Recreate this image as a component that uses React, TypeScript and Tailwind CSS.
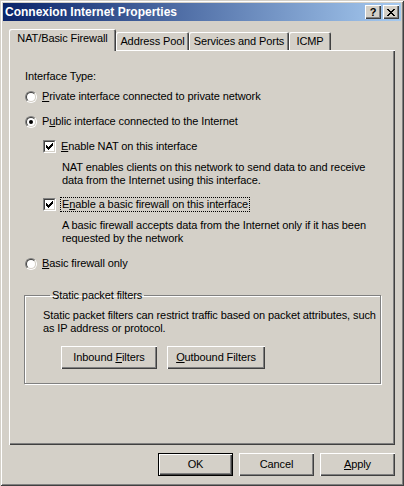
import React from 'react';

const face = 'bg-[#d4d0c8]';
const raised = 'shadow-[inset_1px_1px_0_#ffffff,inset_-1px_-1px_0_#404040,inset_-2px_-2px_0_#808080]';

function U({ children }: { children: React.ReactNode }) {
  return <span className="underline underline-offset-[1px]">{children}</span>;
}

function Radio({ checked }: { checked?: boolean }) {
  return (
    <span className="relative block h-[12px] w-[12px] shrink-0 rounded-full border border-t-[#808080] border-l-[#808080] border-b-white border-r-white">
      <span className="flex h-full w-full items-center justify-center rounded-full border border-t-[#404040] border-l-[#404040] border-b-[#d4d0c8] border-r-[#d4d0c8] bg-white">
        {checked && <span className="block h-[4px] w-[4px] rounded-full bg-black" />}
      </span>
    </span>
  );
}

function Check() {
  // classic 7x7 pixel tick
  const rows = ['......X', '.....XX', 'X...XXX', 'XX.XXX.', 'XXXXX..', '.XXX...', '..X....'];
  return (
    <span className="block h-[13px] w-[13px] shrink-0 border border-t-[#808080] border-l-[#808080] border-b-white border-r-white">
      <span className="flex h-full w-full items-center justify-center border border-t-[#404040] border-l-[#404040] border-b-[#d4d0c8] border-r-[#d4d0c8] bg-white">
        <svg width="7" height="7" viewBox="0 0 7 7" shapeRendering="crispEdges">
          {rows.map((r, y) =>
            r.split('').map((c, x) => (c === 'X' ? <rect key={`${x}-${y}`} x={x} y={y} width="1" height="1" fill="#000" /> : null)),
          )}
        </svg>
      </span>
    </span>
  );
}

function Button({ children, w, isDefault }: { children: React.ReactNode; w: string; isDefault?: boolean }) {
  return (
    <div className={`${w} h-[23px] ${isDefault ? 'border border-black' : ''}`}>
      <div className={`flex h-full w-full items-center justify-center ${raised}`}>{children}</div>
    </div>
  );
}

const tabs = [
  { label: 'Address Pool', w: 'w-[73px]' },
  { label: 'Services and Ports', w: 'w-[100px]' },
  { label: 'ICMP', w: 'w-[42px]' },
];

export default function App() {
  return (
    <div
      className={`flex h-[486px] w-[404px] flex-col p-[3px] text-[11px] leading-[13px] tracking-[-0.1px] whitespace-nowrap text-black ${face} shadow-[inset_1px_1px_0_#d4d0c8,inset_-1px_-1px_0_#404040,inset_2px_2px_0_#ffffff,inset_-2px_-2px_0_#808080]`}
      style={{ fontFamily: '"Liberation Sans", Arial, sans-serif' }}
    >
      {/* Title bar */}
      <div className="flex h-[18px] items-center bg-[linear-gradient(to_right,#0a246a,#a6caf0)] pl-[2px] pr-[2px]">
        <span className="flex-1 text-[12px] font-bold tracking-normal text-white">Connexion Internet Properties</span>
        <div className="flex gap-[2px]">
          <div className={`flex h-[14px] w-[16px] items-center justify-center ${face} ${raised} text-[11px] font-bold leading-none`}>?</div>
          <div className={`flex h-[14px] w-[16px] items-center justify-center ${face} ${raised}`}>
            <svg width="8" height="7" viewBox="0 0 8 7" shapeRendering="crispEdges">
              <path d="M0 0h2v1H0zM6 0h2v1H6zM1 1h2v1H1zM5 1h2v1H5zM2 2h4v1H2zM3 3h2v1H3zM2 4h4v1H2zM1 5h2v1H1zM5 5h2v1H5zM0 6h2v1H0zM6 6h2v1H6z" fill="#000" />
            </svg>
          </div>
        </div>
      </div>

      <div className="flex flex-1 flex-col px-[6px]">
        {/* Tabs */}
        <div className="mt-[8px] flex items-end">
          <div className={`relative z-10 -mb-px flex h-[22px] w-[107px] items-center justify-center pb-[3px] ${face} rounded-t-[2px] shadow-[inset_1px_1px_0_#ffffff,inset_-1px_0_0_#404040,inset_-2px_0_0_#808080]`}>
            NAT/Basic Firewall
          </div>
          {tabs.map(t => (
            <div
              key={t.label}
              className={`flex h-[18px] ${t.w} items-center justify-center ${face} rounded-t-[2px] shadow-[inset_1px_1px_0_#ffffff,inset_-1px_0_0_#404040,inset_-2px_0_0_#808080]`}
            >
              {t.label}
            </div>
          ))}
        </div>

        {/* Panel */}
        <div className={`flex h-[395px] flex-col pl-[16px] pt-[20px] ${raised}`}>
          <div>Interface Type:</div>

          <div className="mt-[7px] flex items-center gap-[5px]">
            <Radio />
            <span>
              <U>P</U>rivate interface connected to private network
            </span>
          </div>
          <div className="mt-[12px] flex items-center gap-[5px]">
            <Radio checked />
            <span>
              P<U>u</U>blic interface connected to the Internet
            </span>
          </div>

          <div className="ml-[18px] mt-[12px] flex items-center gap-[5px]">
            <Check />
            <span>
              <U>E</U>nable NAT on this interface
            </span>
          </div>
          <div className="ml-[37px] mt-[8px]">
            NAT enables clients on this network to send data to and receive
            <br />
            data from the Internet using this interface.
          </div>

          <div className="ml-[18px] mt-[10px] flex items-center gap-[4px]">
            <Check />
            <span className="border border-dotted border-black px-px">
              E<U>n</U>able a basic firewall on this interface
            </span>
          </div>
          <div className="ml-[37px] mt-[7px]">
            A basic firewall accepts data from the Internet only if it has been
            <br />
            requested by the network
          </div>

          <div className="mt-[12px] flex items-center gap-[5px]">
            <Radio />
            <span>
              <U>B</U>asic firewall only
            </span>
          </div>

          <fieldset className="-ml-px mt-[19px] w-[357px] border border-[#808080] pb-[14px] pl-[18px] pt-[7px] shadow-[1px_1px_0_#ffffff,inset_1px_1px_0_#ffffff]">
            <legend className="ml-[7px] px-[2px]">Static packet filters</legend>
            <div>
              Static packet filters can restrict traffic based on packet attributes, such
              <br />
              as IP address or protocol.
            </div>
            <div className="ml-[18px] mt-[11px] flex gap-[10px]">
              <Button w="w-[96px]">
                Inbound&nbsp;<U>F</U>ilters
              </Button>
              <Button w="w-[98px]">
                <U>O</U>utbound Filters
              </Button>
            </div>
          </fieldset>
        </div>

        {/* Dialog buttons */}
        <div className="mt-[8px] flex justify-end gap-[6px]">
          <Button w="w-[75px]" isDefault>
            OK
          </Button>
          <Button w="w-[75px]">Cancel</Button>
          <Button w="w-[75px]">
            <U>A</U>pply
          </Button>
        </div>
      </div>
    </div>
  );
}
